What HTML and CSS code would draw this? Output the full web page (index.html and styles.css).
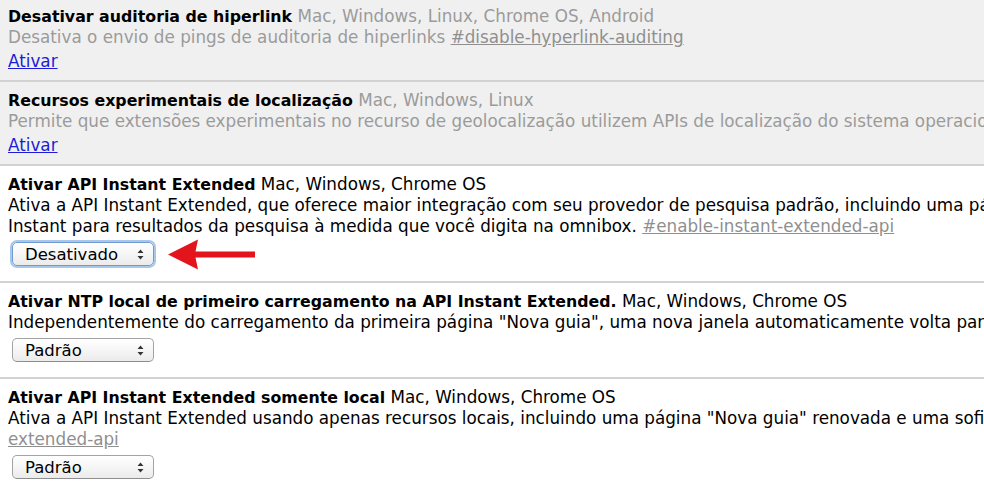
FILE: index.html
```html
<!DOCTYPE html>
<html lang="pt">
<head>
<meta charset="utf-8">
<link rel="stylesheet" href="styles.css">
</head>
<body>
<div class="flags">
  <div class="exp disabled first">
    <div class="line"><span class="name">Desativar auditoria de hiperlink</span> <span class="plat">Mac, Windows, Linux, Chrome OS, Android</span></div>
    <div class="line desc">Desativa o envio de pings de auditoria de hiperlinks <a class="perm" href="#">#disable-hyperlink-auditing</a></div>
    <div class="line act-line"><a class="act" href="#">Ativar</a></div>
  </div>
  <div class="exp disabled">
    <div class="line"><span class="name">Recursos experimentais de localização</span> <span class="plat">Mac, Windows, Linux</span></div>
    <div class="line desc">Permite que extensões experimentais no recurso de geolocalização utilizem APIs de localização do sistema operacional</div>
    <div class="line act-line"><a class="act" href="#">Ativar</a></div>
  </div>
  <div class="exp">
    <div class="line"><span class="name">Ativar API Instant Extended</span> <span class="plat">Mac, Windows, Chrome OS</span></div>
    <div class="line desc">Ativa a API Instant Extended, que oferece maior integração com seu provedor de pesquisa padrão, incluindo uma página</div>
    <div class="line desc">Instant para resultados da pesquisa à medida que você digita na omnibox. <a class="perm" href="#">#enable-instant-extended-api</a></div>
    <div class="ctrl">
      <div class="select focus"><span>Desativado</span><svg class="updown" width="7" height="11" viewBox="0 0 7 11"><path d="M3.5 0.5L6.5 4H0.5Z M3.5 10.5L6.5 7H0.5Z" fill="#333"/></svg></div>
      <svg class="arrow" width="88" height="31" viewBox="0 0 88 31"><path d="M0 15.5L30 0.5L27.5 12.5L87 12.5L87 18.5L27.5 18.5L30 30.5Z" fill="#e3141b"/></svg>
    </div>
  </div>
  <div class="exp">
    <div class="line"><span class="name">Ativar NTP local de primeiro carregamento na API Instant Extended.</span> <span class="plat">Mac, Windows, Chrome OS</span></div>
    <div class="line desc">Independentemente do carregamento da primeira página "Nova guia", uma nova janela automaticamente volta para a página</div>
    <div class="ctrl">
      <div class="select"><span>Padrão</span><svg class="updown" width="7" height="11" viewBox="0 0 7 11"><path d="M3.5 0.5L6.5 4H0.5Z M3.5 10.5L6.5 7H0.5Z" fill="#333"/></svg></div>
    </div>
  </div>
  <div class="exp">
    <div class="line"><span class="name">Ativar API Instant Extended somente local</span> <span class="plat">Mac, Windows, Chrome OS</span></div>
    <div class="line desc">Ativa a API Instant Extended usando apenas recursos locais, incluindo uma página "Nova guia" renovada e uma sofisticada</div>
    <div class="line desc"><a class="perm" href="#">extended-api</a></div>
    <div class="ctrl">
      <div class="select"><span>Padrão</span><svg class="updown" width="7" height="11" viewBox="0 0 7 11"><path d="M3.5 0.5L6.5 4H0.5Z M3.5 10.5L6.5 7H0.5Z" fill="#333"/></svg></div>
    </div>
  </div>
</div>
</body>
</html>
```
FILE: styles.css
```css
html, body {
  margin: 0;
  padding: 0;
  background: #fff;
  overflow: hidden;
}
body {
  width: 984px;
  height: 484px;
  font-family: "DejaVu Sans", "Noto Sans", sans-serif;
  font-size: 16.8px;
  color: #000;
}
.flags {
  display: flex;
  flex-direction: column;
}
.exp {
  padding: 8px 0 15px 8px;
  border-bottom: 2px solid #d2d2d2;
  white-space: nowrap;
  overflow: hidden;
}
.exp.first {
  padding-top: 6px;
}
.exp.disabled {
  background: #f0f0f0;
  color: #9b9b9b;
  padding-bottom: 8px;
}
.line {
  height: 21px;
  line-height: 21px;
}
.act-line {
  margin-top: 3px;
}
.name {
  font-weight: bold;
  font-size: 15.8px;
  color: #000;
}
.perm {
  color: #8f8f8f;
  text-decoration: underline;
}
.act {
  color: #1c1cd8;
  text-decoration: underline;
}
.ctrl {
  display: flex;
  align-items: center;
  height: 24px;
  margin-top: 5px;
  padding-left: 4px;
}
.select {
  box-sizing: border-box;
  width: 142px;
  height: 24px;
  flex: none;
  border: 1px solid #a3a3a3;
  border-bottom-color: #8e8e8e;
  border-radius: 5px;
  background: linear-gradient(#ffffff, #f6f6f6 50%, #ebebeb);
  display: flex;
  align-items: center;
  justify-content: space-between;
  padding: 0 9px 0 12px;
  font-size: 16.5px;
}
.select.focus {
  border-color: #6f9bd3;
  box-shadow: 0 0 0 2px #aac7ea;
}
.arrow {
  flex: none;
  margin: -4px 0 -4px 14px;
}
```
